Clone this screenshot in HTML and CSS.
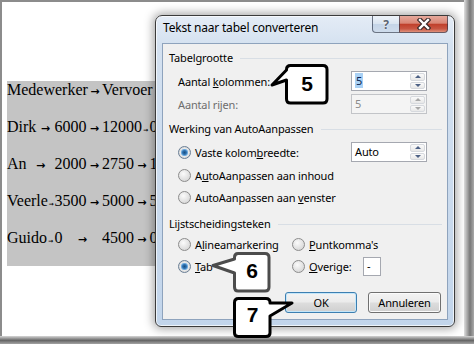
FILE: index.html
```html
<!DOCTYPE html>
<html lang="nl">
<head>
    <meta charset="UTF-8">
    <title>Tekst naar tabel converteren</title>
    <link rel="stylesheet" href="styles.css">
</head>
<body>
    <div class="shot">
        <div class="page">
            <!-- Word document text with tab marks -->
            <div class="doc">
                <p><span class="cell w2">Medewerker<i class="tab">→</i></span>Vervoer</p>
                <p><span class="cell">Dirk<i class="tab">→</i></span><span class="cell">6000<i class="tab">→</i></span><span class="cell">12000<i class="tab tight">→</i></span>0</p>
                <p><span class="cell">An<i class="tab">→</i></span><span class="cell">2000<i class="tab">→</i></span><span class="cell">2750<i class="tab">→</i></span>1</p>
                <p><span class="cell">Veerle<i class="tab tight">→</i></span><span class="cell">3500<i class="tab">→</i></span><span class="cell">5000<i class="tab">→</i></span>5</p>
                <p><span class="cell">Guido<i class="tab tight">→</i></span><span class="cell">0<i class="tab">→</i></span><span class="cell">4500<i class="tab">→</i></span>0</p>
            </div>
        </div>

        <!-- dialog window -->
        <div class="dialog">
            <div class="titlebar">
                <span class="title">Tekst naar tabel converteren</span>
                <div class="caption-btns">
                    <span class="cbtn help">?</span>
                    <span class="cbtn close">
                        <svg width="14" height="12" viewBox="0 0 14 12">
                            <path d="M3 2 L11 10 M11 2 L3 10" stroke="#3a2a2a" stroke-width="4.6" stroke-linecap="square"/>
                            <path d="M3 2 L11 10 M11 2 L3 10" stroke="#fff" stroke-width="2.4" stroke-linecap="square"/>
                        </svg>
                    </span>
                </div>
            </div>
            <div class="client">
                <div class="group-head">Tabelgrootte</div>
                <div class="field">
                    <span class="label">Aantal <u>k</u>olommen:</span>
                    <div class="spin"><span class="val"><span class="sel">5</span></span><span class="arrows"><i class="up"></i><i class="down"></i></span></div>
                </div>
                <div class="field gap3 disabled">
                    <span class="label">Aantal rijen:</span>
                    <div class="spin"><span class="val">5</span><span class="arrows"><i class="up"></i><i class="down"></i></span></div>
                </div>

                <div class="group-head gh2">Werking van AutoAanpassen</div>
                <div class="field gap6">
                    <span class="label radio on"><i class="rb"></i><span>Vaste kolom<u>b</u>reedte:</span></span>
                    <div class="spin"><span class="val">Auto</span><span class="arrows"><i class="up"></i><i class="down"></i></span></div>
                </div>
                <div class="opt first"><span class="radio"><i class="rb"></i><span>A<u>u</u>toAanpassen aan inhoud</span></span></div>
                <div class="opt"><span class="radio"><i class="rb"></i><span>AutoAanpassen aan <u>v</u>enster</span></span></div>

                <div class="group-head gh3">Lijstscheidingsteken</div>
                <div class="choices">
                    <span class="radio"><i class="rb"></i><span>A<u>l</u>ineamarkering</span></span>
                    <span class="radio"><i class="rb"></i><span><u>P</u>untkomma's</span></span>
                    <span class="radio on"><i class="rb"></i><span><u>T</u>ab</span></span>
                    <div class="other">
                        <span class="radio"><i class="rb"></i><span><u>O</u>verige:</span></span>
                        <span class="textbox">-</span>
                    </div>
                </div>

                <div class="buttons">
                    <span class="btn default">OK</span>
                    <span class="btn">Annuleren</span>
                </div>
            </div>
        </div>

        <!-- numbered callouts -->
        <svg class="callouts" width="474" height="344" viewBox="0 0 474 344">
            <path class="call" d="M290.5 65.5 H323 Q327 65.5 327 69.5 V99 Q327 103 323 103 H290.5 Q286.5 103 286.5 99 V80 L272 85 L286.5 70 V69.5 Q286.5 65.5 290.5 65.5 Z"/>
            <text x="307" y="91">5</text>
            <path class="call gray" d="M238 253.5 H265 Q269 253.5 269 257.5 V287 Q269 291 265 291 H238 Q234.5 291 234.5 287 V273 L213 265.5 L234.5 259 V257.5 Q234.5 253.5 238 253.5 Z"/>
            <text x="252" y="278">6</text>
            <path class="call" d="M238.5 298.5 H266 Q270 298.5 270 302.5 V303 L292 303 L270 316 V333 Q270 336.5 266 336.5 H238.5 Q234.5 336.5 234.5 333 V302.5 Q234.5 298.5 238.5 298.5 Z"/>
            <text x="252.5" y="322">7</text>
        </svg>
    </div>
</body>
</html>
```

FILE: styles.css
```css
/* General Reset */
* {
    margin: 0;
    padding: 0;
    box-sizing: border-box;
}

body {
    font-family: "Noto Sans", "Open Sans", sans-serif;
}

/* Screenshot frame with its shadow at right and bottom */
.shot {
    position: relative;
    width: 474px;
    height: 344px;
    padding: 2px 10px 8px 2px;
    overflow: hidden;
    background:
        linear-gradient(to bottom, #d6d6d6, #666 55%, #a4a4a4) left bottom / 100% 8px no-repeat,
        linear-gradient(to right, #e0e0e0, #777 60%, #aaa) right top / 10px 100% no-repeat,
        #8c8c8c;
}

.page {
    height: 100%;
    background: #fff;
    display: flow-root;
}

/* Word document */
.doc {
    margin: 79px 0 0 5px;
    width: 220px;
    background: #c4c4c4;
    display: flow-root;
    font: 16px/18px "Liberation Serif", serif;
    color: #000;
}

.doc p {
    margin: 0 0 19px;
    white-space: nowrap;
}

.cell {
    display: inline-flex;
    align-items: baseline;
    width: 47.5px;
}

.cell.w2 {
    width: 95px;
}

.tab {
    flex: 1;
    text-align: center;
    font: normal bold 11px/1 "DejaVu Sans", sans-serif;
}

.tab.tight {
    font-size: 6px;
}

/* Dialog window */
.dialog {
    position: absolute;
    left: 155px;
    top: 15px;
    width: 300px;
    height: 312px;
    display: flex;
    flex-direction: column;
    padding: 0 6px 6px;
    border: 1px solid #3b3b3b;
    border-radius: 7px 7px 6px 6px;
    background: linear-gradient(180deg, #e4ecf6 0, #d4e1f0 30px, #c2d5eb 100%);
    box-shadow: 0 0 10px 2px rgba(0, 0, 0, 0.35), inset 0 0 0 1px rgba(255, 255, 255, 0.7);
    font-size: 11px;
    letter-spacing: -0.15px;
    color: #000;
}

.titlebar {
    height: 27px;
    display: flex;
    padding-left: 1px;
}

.title {
    font-size: 12px;
    line-height: 24px;
    letter-spacing: -0.2px;
}

.caption-btns {
    margin-left: auto;
    display: flex;
    height: 17px;
}

.cbtn {
    display: flex;
    align-items: center;
    justify-content: center;
    border: 1px solid rgba(40, 50, 70, 0.65);
    border-top: none;
}

.cbtn.help {
    width: 27px;
    border-right: none;
    border-radius: 0 0 0 4px;
    background: linear-gradient(#eef3f9, #d9e4f0 50%, #c4d4e7 50%, #cfdcec);
    font-weight: bold;
    font-size: 12px;
    color: #5b6470;
    text-shadow: 0 0 2px #fff;
}

.cbtn.close {
    width: 49px;
    border-radius: 0 0 4px 0;
    background: linear-gradient(#e6a99c, #d98676 45%, #c0402c 52%, #c85643 80%, #e0917c);
}

.client {
    flex: 1;
    border: 1px solid #8ea3bd;
    background: #f0f0f0;
    padding: 7px 5px 0 6px;
}

.group-head {
    display: flex;
    align-items: center;
    height: 14px;
    line-height: 14px;
}

.group-head::after {
    content: "";
    flex: 1;
    height: 1px;
    margin-left: 7px;
    background: #d8dee5;
}

.gh2 {
    margin-top: 8px;
}

.gh3 {
    margin-top: 9px;
}

.field {
    display: flex;
    align-items: center;
    height: 20px;
    margin-top: 6px;
    padding-left: 9px;
}

.field.gap3 {
    margin-top: 3px;
}

.field .label {
    width: 173px;
}

.disabled .label {
    color: #6d6d6d;
}

/* spin boxes */
.spin {
    width: 76px;
    height: 20px;
    display: flex;
    border: 1px solid #a5a8b0;
    background: #fff;
}

.spin .val {
    flex: 1;
    padding-left: 3px;
    line-height: 17px;
}

.spin .sel {
    background: #a9d1f5;
    color: #0b1f4f;
    padding: 0 1px;
}

.arrows {
    width: 17px;
    display: flex;
    flex-direction: column;
    padding: 1px;
    gap: 1px;
}

.arrows i {
    flex: 1;
    display: flex;
    align-items: center;
    justify-content: center;
    border: 1px solid #d6d9de;
    border-radius: 2px;
    background: linear-gradient(#fafafa, #e8e8e8);
}

.arrows i::before {
    content: "";
    border-left: 3px solid transparent;
    border-right: 3px solid transparent;
}

.arrows .up::before {
    border-bottom: 3px solid #4d6185;
}

.arrows .down::before {
    border-top: 3px solid #4d6185;
}

.disabled .spin {
    border-color: #c2c4c8;
    background: #f4f4f4;
    color: #8a8a8a;
}

.disabled .arrows .up::before {
    border-bottom-color: #a8a8a8;
}

.disabled .arrows .down::before {
    border-top-color: #a8a8a8;
}

/* radio buttons */
.radio {
    display: flex;
    align-items: center;
    gap: 4px;
    white-space: nowrap;
}

.rb {
    width: 13px;
    height: 13px;
    flex: none;
    border: 1px solid #8c8c8c;
    border-radius: 50%;
    background: radial-gradient(circle at 40% 35%, #fbfbfb, #e2e2e2 55%, #cfcfcf);
}

.radio.on .rb {
    border-color: #6a7f96;
    background: radial-gradient(circle, #1c4f80 0, #2f74b4 2px, #8ec0ea 3.5px, #eaeaea 4px, #d4d4d4 6px);
}

.opt {
    height: 22px;
    display: flex;
    align-items: center;
    padding-left: 9px;
}

.opt.first {
    margin-top: 2px;
}

.choices {
    display: grid;
    grid-template-columns: 114px 1fr;
    grid-auto-rows: 22px;
    align-items: center;
    margin-top: 2px;
    padding-left: 9px;
}

.other {
    display: flex;
    align-items: center;
}

.other .radio {
    width: 71px;
}

.textbox {
    width: 18px;
    height: 19px;
    border: 1px solid #a5a8b0;
    background: #fff;
    padding-left: 3px;
    line-height: 16px;
}

/* buttons */
.buttons {
    display: flex;
    justify-content: flex-end;
    gap: 11px;
    margin-top: 15px;
    padding-right: 1px;
}

.btn {
    width: 73px;
    height: 21px;
    display: flex;
    align-items: center;
    justify-content: center;
    border: 1px solid #707070;
    border-radius: 3px;
    background: linear-gradient(#f3f3f3, #ebebeb 48%, #dddddd 52%, #cfcfcf);
    box-shadow: inset 0 0 0 1px #fbfbfb;
}

.btn.default {
    width: 72px;
    border-color: #3c7fb1;
    box-shadow: inset 0 0 0 1px #c4e6f9;
}

/* callouts */
.callouts {
    position: absolute;
    left: 0;
    top: 0;
    pointer-events: none;
}

.call {
    fill: #fff;
    stroke: #000;
    stroke-width: 3;
    stroke-linejoin: round;
}

.call.gray {
    stroke: #4c4c4c;
}

.callouts text {
    font: bold 21px "Liberation Sans", sans-serif;
    text-anchor: middle;
    fill: #000;
}
```
